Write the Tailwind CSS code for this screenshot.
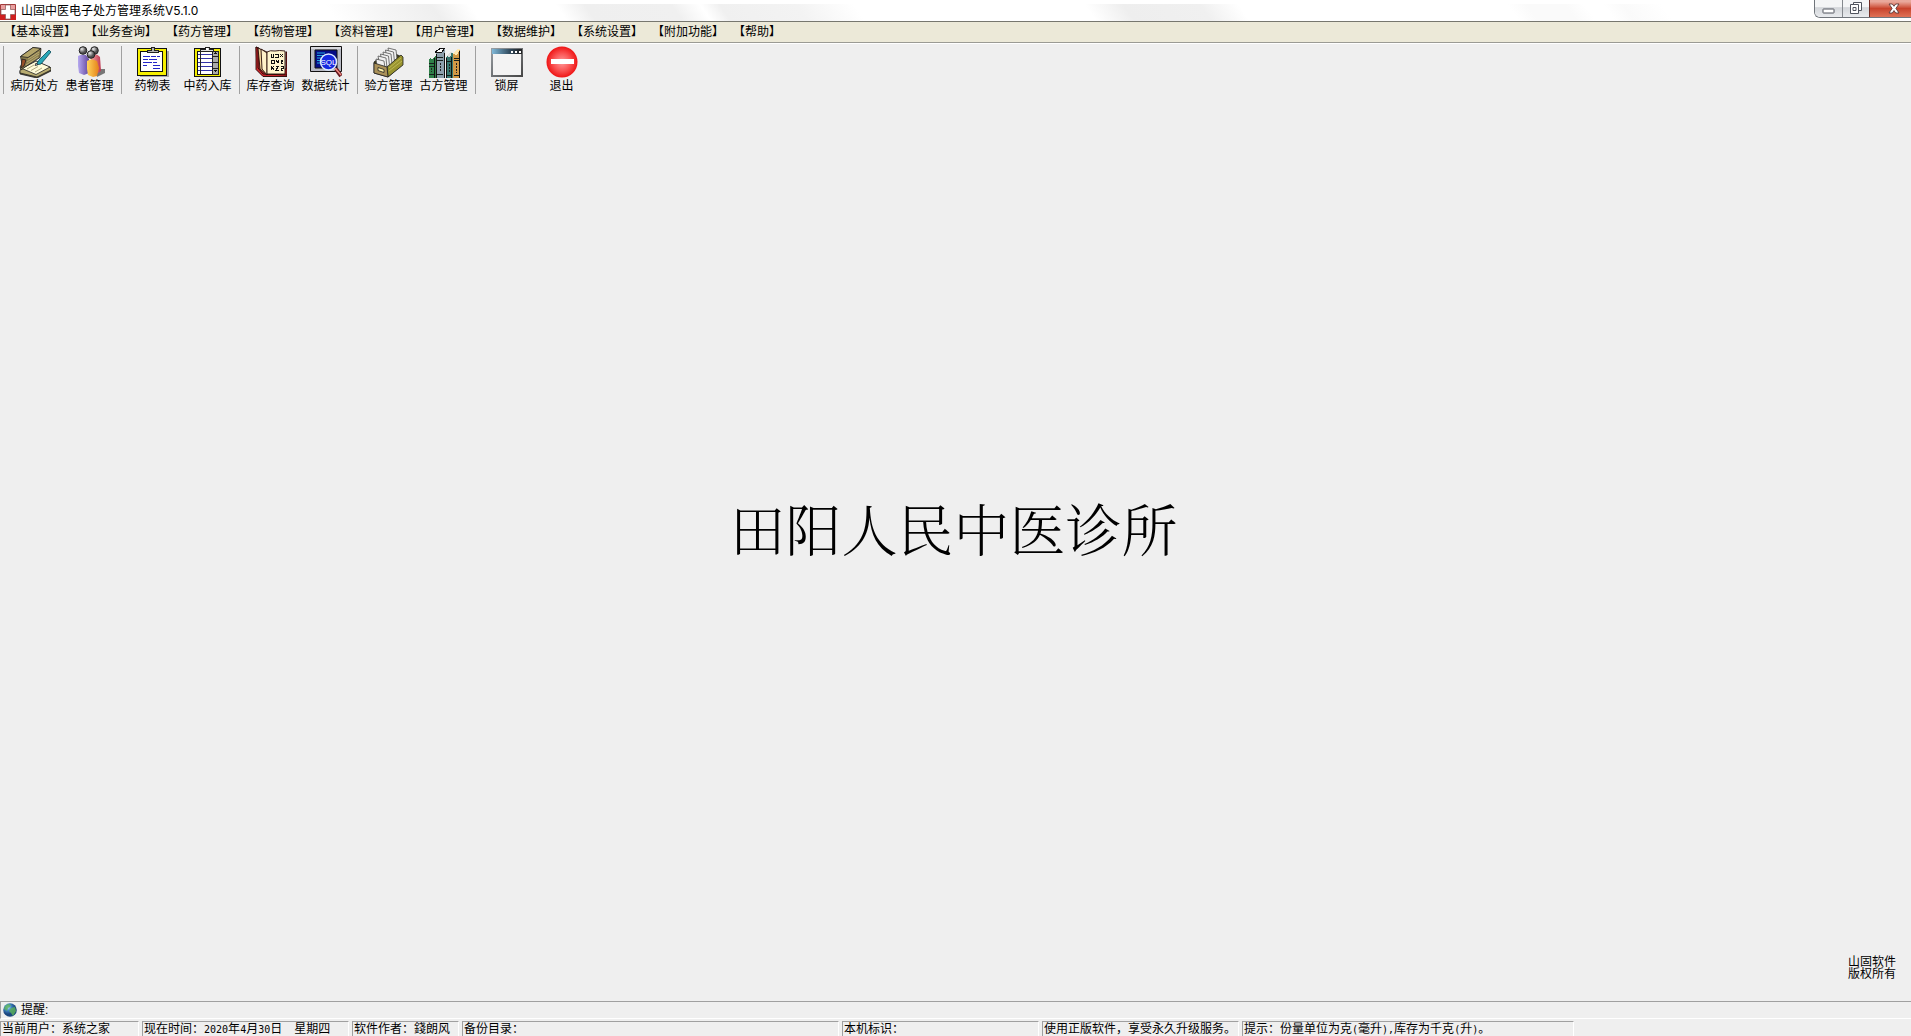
<!DOCTYPE html>
<html lang="zh-CN">
<head>
<meta charset="utf-8">
<title>山固中医电子处方管理系统V5.1.0</title>
<script src="https://cdn.jsdelivr.net/npm/@tailwindcss/browser@4"></script>
</head>
<body class="flex h-screen flex-col overflow-hidden bg-[#efefef] font-['Liberation_Sans','Noto_Sans_CJK_SC',sans-serif] text-xs text-black">

<!-- Title bar -->
<header class="relative flex h-[21px] shrink-0 items-start justify-between bg-white">
  <div class="absolute inset-x-0 top-1 bottom-0 bg-[linear-gradient(55deg,#fff_17.5%,#f6f6f6_20%,#efefef_23%,#fff_25%,#fff_29.5%,#efefef_31%,#f0f0f0_35.5%,#fff_37%,#f0f0f0_38%,#f3f3f3_42%,#fff_45%,#fff_57%,#eeeeee_59%,#f0f0f0_63%,#fff_65%,#fff_79%,#fafafa_80%,#fafafa_82%,#fff_83%,#fff_84%,#fafafa_85%,#fff_87%)]"></div>
  <div class="relative flex items-center gap-[5px]">
    <svg class="mt-[3px] size-4" viewBox="0 0 16 16"><rect width="16" height="16" rx="1" fill="#a33a3a"/><rect x="1" y="1" width="14" height="14" fill="#e9a0a0"/><path d="M0 10h6v6H0zM10 10h6v6h-6z" fill="#cf1f1f"/><path d="M5.500 1h5v4.500H15v5h-4.500V15h-5v-4.500H1v-5h4.500z" fill="#fff" stroke="#8a5555" stroke-width=".7"/></svg>
    <h1 class="mt-px font-[Inter,'Noto_Sans_CJK_SC',sans-serif] text-xs leading-5">山固中医电子处方管理系统V5.1.0</h1>
  </div>
  <div class="relative flex h-[18px] w-[97px] overflow-hidden rounded-bl-md border-b border-l border-[#70757b]">
    <button aria-label="最小化" class="flex w-[28px] items-center justify-center border-r border-[#85898e] bg-linear-to-b from-[#f4f5f6] from-40% via-[#d3d6da] via-45% to-[#e9ebee]">
      <svg class="mt-1 h-[6px] w-[13px]" viewBox="0 0 13 6"><rect x="1" y="1" width="11" height="4" rx=".5" fill="#fff" stroke="#50545e"/></svg>
    </button>
    <button aria-label="还原" class="flex w-[27px] items-center justify-center border-r border-[#702c24] bg-linear-to-b from-[#f4f5f6] from-40% via-[#d3d6da] via-45% to-[#e9ebee] pb-[2px]">
      <svg class="size-3" viewBox="0 0 12 12" fill="#fff" stroke="#50545e"><path d="M3.500.5h8v8h-8z"/><path d="M.5 2.500h8v9h-8z"/><path d="M3 5.500h3v3H3z"/></svg>
    </button>
    <button aria-label="关闭" class="flex flex-1 items-center justify-center bg-linear-to-b from-[#e9a89b] from-10% via-[#c8432c] via-50% to-[#df7256] pb-px pl-[6px]">
      <svg class="h-[11px] w-3" viewBox="0 0 12 11"><path d="M1 1h3.300L6 3.300 7.700 1H11L7.900 5.400 11 10H7.700L6 7.600 4.300 10H1l3.100-4.600z" fill="#fff" stroke="#5c3a3a" stroke-width=".9"/></svg>
    </button>
  </div>
</header>

<!-- Menu bar -->
<nav class="flex h-[22px] shrink-0 items-center border-y border-t-[#77776f] border-b-[#9b9b94] bg-[#ece9d8] pt-px pl-1 leading-[19px]">
  <a href="#" class="w-[81px]">【基本设置】</a>
  <a href="#" class="w-[81px]">【业务查询】</a>
  <a href="#" class="w-[81px]">【药方管理】</a>
  <a href="#" class="w-[81px]">【药物管理】</a>
  <a href="#" class="w-[81px]">【资料管理】</a>
  <a href="#" class="w-[81px]">【用户管理】</a>
  <a href="#" class="w-[81px]">【数据维护】</a>
  <a href="#" class="w-[81px]">【系统设置】</a>
  <a href="#" class="w-[81px]">【附加功能】</a>
  <a href="#" class="w-[57px]">【帮助】</a>
</nav>

<!-- Toolbar -->
<div role="toolbar" class="flex shrink-0 border-t border-white pt-[2px] pl-[3px] leading-4">
  <div class="flex w-[118px] border-l border-[#a0a0a0] pl-[3px]">
    <button class="flex w-[55px] flex-col items-center">
      <svg class="size-8" viewBox="0 0 32 32" stroke="#222" stroke-width=".8"><path d="M1 25l16-10 15 7v3L18 32 1 28z" fill="#55502f"/><path d="M1 24l16-8 15 6v2l-14 7-17-4z" fill="#b7ab70"/><path d="M3 22.500L17 15l14 6-14 7.500z" fill="#fffbd8"/><path d="M1.500 10.500L14 1.500l8 1-1 9L6 21l-4 3-1-3 2-3z" fill="#8b7d4c"/><path d="M1.500 10.500L14 1.500l8 1L9 11.500z" fill="#b5a66a"/><path d="M3 13l4 1-2 6-3 2z" fill="#9a4f27"/><path d="M9 13l11-7M8 16l12-8M7 19l12-8" stroke="#c4b67c"/><path d="M8 23l7-4M12 24.500l7-4M16 26l7-4" stroke="#999269"/><path d="M17 19l3-5L30 4l2 2-10 12z" fill="#28a6b7" stroke="#074957"/><path d="M17 17l2 1.500-3 1z" fill="#eee"/></svg>病历处方</button>
    <button class="flex w-[55px] flex-col items-center">
      <svg class="size-8" viewBox="0 0 32 32"><defs><linearGradient id="pa"><stop stop-color="#b6a9ef"/><stop offset="1" stop-color="#62469e"/></linearGradient><linearGradient id="pb"><stop stop-color="#f4a4a0"/><stop offset="1" stop-color="#bd3650"/></linearGradient><linearGradient id="pc"><stop stop-color="#ffd45c"/><stop offset="1" stop-color="#e58118"/></linearGradient><radialGradient id="ph" cx=".35" cy=".3"><stop stop-color="#eee"/><stop offset="1" stop-color="#505050"/></radialGradient></defs><path d="M22 23h9v4l-8 4z" fill="#777"/><path d="M4 10q3-2 8-1l3 4v14l-5 2-5-2-1-7z" fill="url(#pa)"/><path d="M17 9q6-2 9 2l1 14-3 2-7-6z" fill="url(#pb)"/><path d="M13 15q4-3 10 0l2 7-2 8-4 1-5-2-1-6z" fill="url(#pc)"/><g fill="url(#ph)" stroke="#222"><circle cx="9" cy="4.500" r="3.800"/><circle cx="20.500" cy="4.500" r="3.800"/><circle cx="17" cy="8.500" r="3.800"/></g></svg>患者管理</button>
  </div>
  <div class="flex w-[118px] border-l border-[#a0a0a0] pl-[3px]">
    <button class="flex w-[55px] flex-col items-center">
      <svg class="size-8" viewBox="0 0 32 32" shape-rendering="crispEdges"><rect x="3" y="5" width="29" height="26" fill="#aaa"/><rect y="2" width="30" height="28" fill="#111"/><rect x="1" y="3" width="28" height="26" fill="#f6f000"/><rect x="3" y="5" width="23" height="21" fill="#111"/><rect x="4" y="6" width="21" height="19" fill="#fff"/><path d="M6 10.500h7m1 0h5m1 0h3M6 13.500h5m1 0h8M6 16.500h9m1 0h4M6 19.500h4m6 0h7M16 22.500h7" stroke="#2525c8"/><path d="M10 6V4h4V1h3v3h4v2z" fill="#b5b5b5" stroke="#222"/></svg>药物表</button>
    <button class="flex w-[55px] flex-col items-center">
      <svg class="size-8" viewBox="0 0 32 32" shape-rendering="crispEdges"><rect x="2" y="2" width="27" height="29" fill="#111"/><rect x="3" y="3" width="25" height="27" fill="#f2ec00"/><rect x="5" y="5" width="21" height="23" fill="#fff" stroke="#111"/><path d="M6 8.500h14M6 12.500h14M6 16.500h14M6 20.500h14M6 24.500h14" stroke="#3333a8"/><path d="M8.500 5v23" stroke="#222"/><path d="M20 5h6v23h-6z" fill="#aaa" stroke="#222"/><path d="M20 10h6M20 16h6M20 22h6" stroke="#222"/><path d="M21 8l2-2 2 2zM21 24h4l-2 2z" fill="#111"/><path d="M8 5V3h5V1h4v2h4v2z" fill="#ddd" stroke="#222"/><rect x="14" y="2" width="2" height="2" fill="#fff"/></svg>中药入库</button>
  </div>
  <div class="flex w-[118px] border-l border-[#a0a0a0] pl-[3px]">
    <button class="flex w-[55px] flex-col items-center">
      <svg class="size-8" viewBox="0 0 32 32" stroke="#260b08" stroke-width=".9"><path d="M1 1l3 1 3 21h24V6h1v24H8L2 23z" fill="#b71f23"/><path d="M1 1l2 1v20l5 6 24 1v1.500H8l-7-7z" fill="#cf252b"/><path d="M3 2l9 4v23l-7-6z" fill="#f4d99c"/><path d="M6 3l6 4v22l-5-6z" fill="#fff2c8"/><path d="M12 6q3-2 8-1 4-1 10 0v23H12z" fill="#fff6ce"/><path d="M16 8v3h2V8m2 3h3V8h-3m5 3l3-3m-3 0l3 3M16 14v3h3v-3zm5 0l2 3 1-3m4 0h-2v3h2m0-2h-2M16 20l3 4m0-4l-3 4m5-4h3l-3 4h3m2-4h2v2h-2v2h2" fill="none" stroke="#111" shape-rendering="crispEdges" stroke-width="1"/></svg>库存查询</button>
    <button class="flex w-[55px] flex-col items-center">
      <svg class="size-8" viewBox="0 0 32 32"><path d="M.5.500h31v25H.5z" fill="#b8bac4" stroke="#111"/><path d="M1 2h30" stroke="#f8f8f8"/><path d="M5 4h22v18H5z" fill="#050c86" stroke="#111"/><path d="M7 7h8M7 9.500h9M7 12h5M7 14.500h3M7 17h3" stroke="#20a9df"/><path d="M26 23l5 7" stroke="#65171d" stroke-width="4"/><path d="M25 22l6 7" stroke="#ef8d83" stroke-width="1.500"/><circle cx="18.500" cy="16" r="8" fill="#1528df" stroke="#dceaff" stroke-width="1.500"/><text x="18.500" y="19" text-anchor="middle" font-size="8" fill="#fff" font-family="Liberation Sans">SQL</text></svg>数据统计</button>
  </div>
  <div class="flex w-[118px] border-l border-[#a0a0a0] pl-[3px]">
    <button class="flex w-[55px] flex-col items-center">
      <svg class="size-8" viewBox="0 0 32 32" stroke="#222" stroke-width=".8"><path d="M1 16L16 5l13 6v8L15 31 1 27z" fill="#44421a"/><g fill="#f0f0f0" stroke="#555"><path d="M15 2l8 2 1 9-7 3z"/><path d="M12.500 4l8 2 1 10-7 2z"/><path d="M10 6l8 2 1 10-7 2z"/><path d="M7.500 8l8 2 1 10-7 1z"/><path d="M5 10l8 2 1 10-7-1z"/><path d="M3 13l8 2 1 7-8-2z"/></g><path d="M14 21L28 9l2 2v8L15 31z" fill="#98932f"/><path d="M16 22L28 12M16 25l13-10" stroke="#c6c05c"/><path d="M1 17l13 4 1 10L1 27z" fill="#a99058"/><path d="M5 21.500l6 2v3l-6-2z" fill="#fff3a8"/></svg>验方管理</button>
    <button class="flex w-[55px] flex-col items-center">
      <svg class="size-8" viewBox="0 0 32 32" shape-rendering="crispEdges"><path d="M2 12l3-2h3v22H1V13z" fill="#2f8049"/><path d="M1 12l4-3h3l-3 4z" fill="#eee"/><path d="M8 7l5-4h4v29H8z" fill="#8d9fac"/><path d="M7 6l6-4h4l-4 5z" fill="#fff" stroke="#111"/><path d="M18 11l4-4h3v25h-7z" fill="#37776f"/><path d="M18 10l4-4h2l-2 5z" fill="#ddd"/><path d="M25 8l4-4h3v28h-7z" fill="#d39945"/><path d="M24 8l5-5h3l-3 6z" fill="#ffe8b4"/><path d="M6.500 12v20M16 7v25M23.500 11v21M31.500 5v27M8.500 8v24M18.500 12v20" stroke="#111"/><path d="M1 17h5M1 20h5M1 28h5M9 11h6M9 14h6M9 28h6M19 15h4M19 29h4M26 12h5M26 14h5M26 29h5" stroke="#16201c"/><path d="M12 17v9M21 18v9M28 17v10M3.500 22v4" stroke="#222" stroke-dasharray="2 1"/></svg>古方管理</button>
  </div>
  <div class="flex w-[118px] border-l border-[#a0a0a0] pl-[3px]">
    <button class="flex w-[55px] flex-col items-center">
      <svg class="size-8" viewBox="0 0 32 32" shape-rendering="crispEdges"><defs><linearGradient id="wa"><stop stop-color="#7fb8d8"/><stop offset=".6" stop-color="#30495c"/><stop offset="1" stop-color="#222"/></linearGradient><linearGradient id="wb" x2="1" y2="1"><stop stop-color="#9aa0a5"/><stop offset="1" stop-color="#444"/></linearGradient></defs><rect y="2" width="32" height="29" fill="url(#wb)"/><rect x="1" y="3" width="30" height="5" fill="url(#wa)"/><rect x="2" y="8" width="28" height="21" fill="#f3f3f3"/><path d="M20 5h2v2h-2zM24 5h2v2h-2zM28 5h2v2h-2z" fill="#fff"/></svg>锁屏</button>
    <button class="flex w-[55px] flex-col items-center">
      <svg class="size-8" viewBox="0 0 32 32"><defs><radialGradient id="ea"><stop stop-color="#ff9c9c"/><stop offset=".55" stop-color="#fa5555"/><stop offset="1" stop-color="#ef1515"/></radialGradient></defs><circle cx="16" cy="16" r="15.500" fill="url(#ea)"/><rect x="5" y="13" width="23" height="5" fill="#fff"/></svg>退出</button>
  </div>
</div>

<!-- Workspace -->
<main class="flex min-h-0 flex-1 flex-col">
  <div class="flex min-h-0 flex-1 items-center justify-center pt-1 pr-1">
    <h2 class="font-['Noto_Serif_CJK_SC','Noto_Sans_CJK_SC',serif] text-[56px] leading-none font-light">田阳人民中医诊所</h2>
  </div>
  <p class="self-end pr-[15px] pb-[21px] leading-3">山固软件<br>版权所有</p>
</main>

<!-- Status area -->
<footer class="shrink-0 whitespace-nowrap">
  <div class="flex h-[18px] items-center gap-1 border-t border-b border-l border-t-[#a0a0a0] border-b-white border-l-[#a0a0a0] pl-[2px] leading-4">
    <svg class="size-[14px]" viewBox="0 0 14 14"><defs><radialGradient id="gl" cx=".35" cy=".3"><stop stop-color="#b6dcff"/><stop offset=".5" stop-color="#3f84c4"/><stop offset="1" stop-color="#1c477f"/></radialGradient></defs><circle cx="7" cy="7" r="6.800" fill="url(#gl)"/><path d="M2 3l3-2 3 1-1 2-2 1-1 3-3-2zM8 5l4-1 1 4-3 5-2-3-2-2z" fill="#5cb458" opacity=".8"/></svg>
    <span>提醒:</span>
  </div>
  <div class="flex gap-[3px] pt-[2px] leading-3">
    <div class="w-[139px] border-t border-r border-l border-t-[#a0a0a0] border-r-white border-l-[#a0a0a0] pt-px pl-px">当前用户：系统之家</div>
    <div class="w-[207px] border-t border-r border-l border-t-[#a0a0a0] border-r-white border-l-[#a0a0a0] pt-px pl-px">现在时间：<span class="font-['DejaVu_Sans_Mono',monospace] text-[10px]">2020</span>年<span class="font-['DejaVu_Sans_Mono',monospace] text-[10px]">4</span>月<span class="font-['DejaVu_Sans_Mono',monospace] text-[10px]">30</span>日　星期四</div>
    <div class="w-[107px] border-t border-r border-l border-t-[#a0a0a0] border-r-white border-l-[#a0a0a0] pt-px pl-px">软件作者：錢朗风</div>
    <div class="w-[377px] border-t border-r border-l border-t-[#a0a0a0] border-r-white border-l-[#a0a0a0] pt-px pl-px">备份目录：</div>
    <div class="w-[197px] border-t border-r border-l border-t-[#a0a0a0] border-r-white border-l-[#a0a0a0] pt-px pl-px">本机标识：</div>
    <div class="w-[197px] border-t border-r border-l border-t-[#a0a0a0] border-r-white border-l-[#a0a0a0] pt-px pl-px">使用正版软件，享受永久升级服务。</div>
    <div class="w-[332px] border-t border-r border-l border-t-[#a0a0a0] border-r-white border-l-[#a0a0a0] pt-px pl-px">提示：份量单位为克<span class="font-['DejaVu_Sans_Mono',monospace] text-[10px]">(</span>毫升<span class="font-['DejaVu_Sans_Mono',monospace] text-[10px]">),</span>库存为千克<span class="font-['DejaVu_Sans_Mono',monospace] text-[10px]">(</span>升<span class="font-['DejaVu_Sans_Mono',monospace] text-[10px]">)</span>。</div>
  </div>
</footer>
</body>
</html>
